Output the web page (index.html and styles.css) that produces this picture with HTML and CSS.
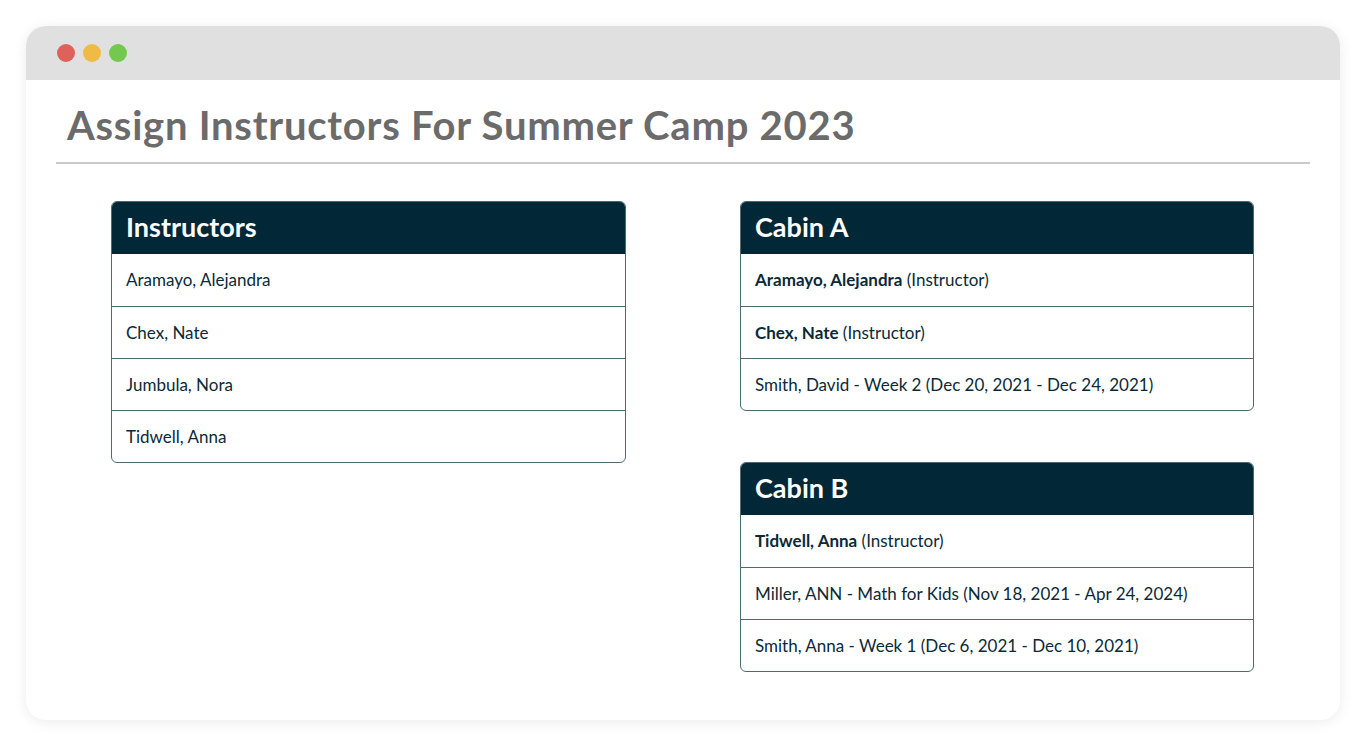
FILE: index.html
```html
<!DOCTYPE html>
<html>
<head>
  <title>Assign Instructors</title>
  <link rel="stylesheet" href="styles.css">
</head>
<body>
  <div class="window">
    <div class="titlebar">
      <span class="dot red"></span>
      <span class="dot yellow"></span>
      <span class="dot green"></span>
    </div>
    <div class="page">
      <h1 class="page-title">Assign Instructors For Summer Camp 2023</h1>
      <div class="columns">
        <div class="column">
          <div class="card">
            <div class="card-header">Instructors</div>
            <div class="card-row">Aramayo, Alejandra</div>
            <div class="card-row">Chex, Nate</div>
            <div class="card-row">Jumbula, Nora</div>
            <div class="card-row">Tidwell, Anna</div>
          </div>
        </div>
        <div class="column">
          <div class="card">
            <div class="card-header">Cabin A</div>
            <div class="card-row"><b>Aramayo, Alejandra</b> (Instructor)</div>
            <div class="card-row"><b>Chex, Nate</b> (Instructor)</div>
            <div class="card-row">Smith, David - Week 2 (Dec 20, 2021 - Dec 24, 2021)</div>
          </div>
          <div class="card">
            <div class="card-header">Cabin B</div>
            <div class="card-row"><b>Tidwell, Anna</b> (Instructor)</div>
            <div class="card-row">Miller, ANN - Math for Kids (Nov 18, 2021 - Apr 24, 2024)</div>
            <div class="card-row">Smith, Anna - Week 1 (Dec 6, 2021 - Dec 10, 2021)</div>
          </div>
        </div>
      </div>
    </div>
  </div>
</body>
</html>
```

FILE: styles.css
```css
body {
  margin: 0;
  padding: 26px;
  background: #ffffff;
  font-family: Lato, "Open Sans", sans-serif;
}

.window {
  width: 1314px;
  height: 694px;
  border-radius: 20px;
  background: #ffffff;
  box-shadow: 0 2px 14px rgba(0, 0, 0, 0.08);
  overflow: hidden;
}

.titlebar {
  height: 54px;
  background: #e0e0e0;
  display: flex;
  align-items: center;
  gap: 8px;
  padding-left: 31px;
}

.dot {
  width: 18px;
  height: 18px;
  border-radius: 50%;
}

.dot.red { background: #e0605a; }
.dot.yellow { background: #efbb44; }
.dot.green { background: #72c94d; }

.page {
  padding: 0 30px;
}

.page-title {
  margin: 0;
  padding: 21px 0 13px 11px;
  font-size: 40px;
  font-weight: 700;
  line-height: 48px;
  letter-spacing: 0.75px;
  color: #6b6b6b;
  border-bottom: 2px solid #cacaca;
}

.columns {
  display: grid;
  grid-template-columns: 515px 514px;
  column-gap: 114px;
  padding: 37px 0 0 55px;
}

.column {
  display: flex;
  flex-direction: column;
  gap: 51px;
}

.card {
  border: 1px solid #4d6a74;
  border-radius: 6px;
  overflow: hidden;
}

.card-header {
  background: #022838;
  color: #ffffff;
  font-size: 27px;
  font-weight: 700;
  height: 52px;
  line-height: 50px;
  padding: 0 14px;
}

.card-row {
  height: 52px;
  line-height: 52px;
  padding: 0 14px;
  font-size: 17px;
  color: #0b2a37;
  border-top: 1px solid #4d6a74;
  box-sizing: border-box;
}

.card-header + .card-row {
  border-top: none;
}

.card-row b {
  font-weight: 700;
}
```
